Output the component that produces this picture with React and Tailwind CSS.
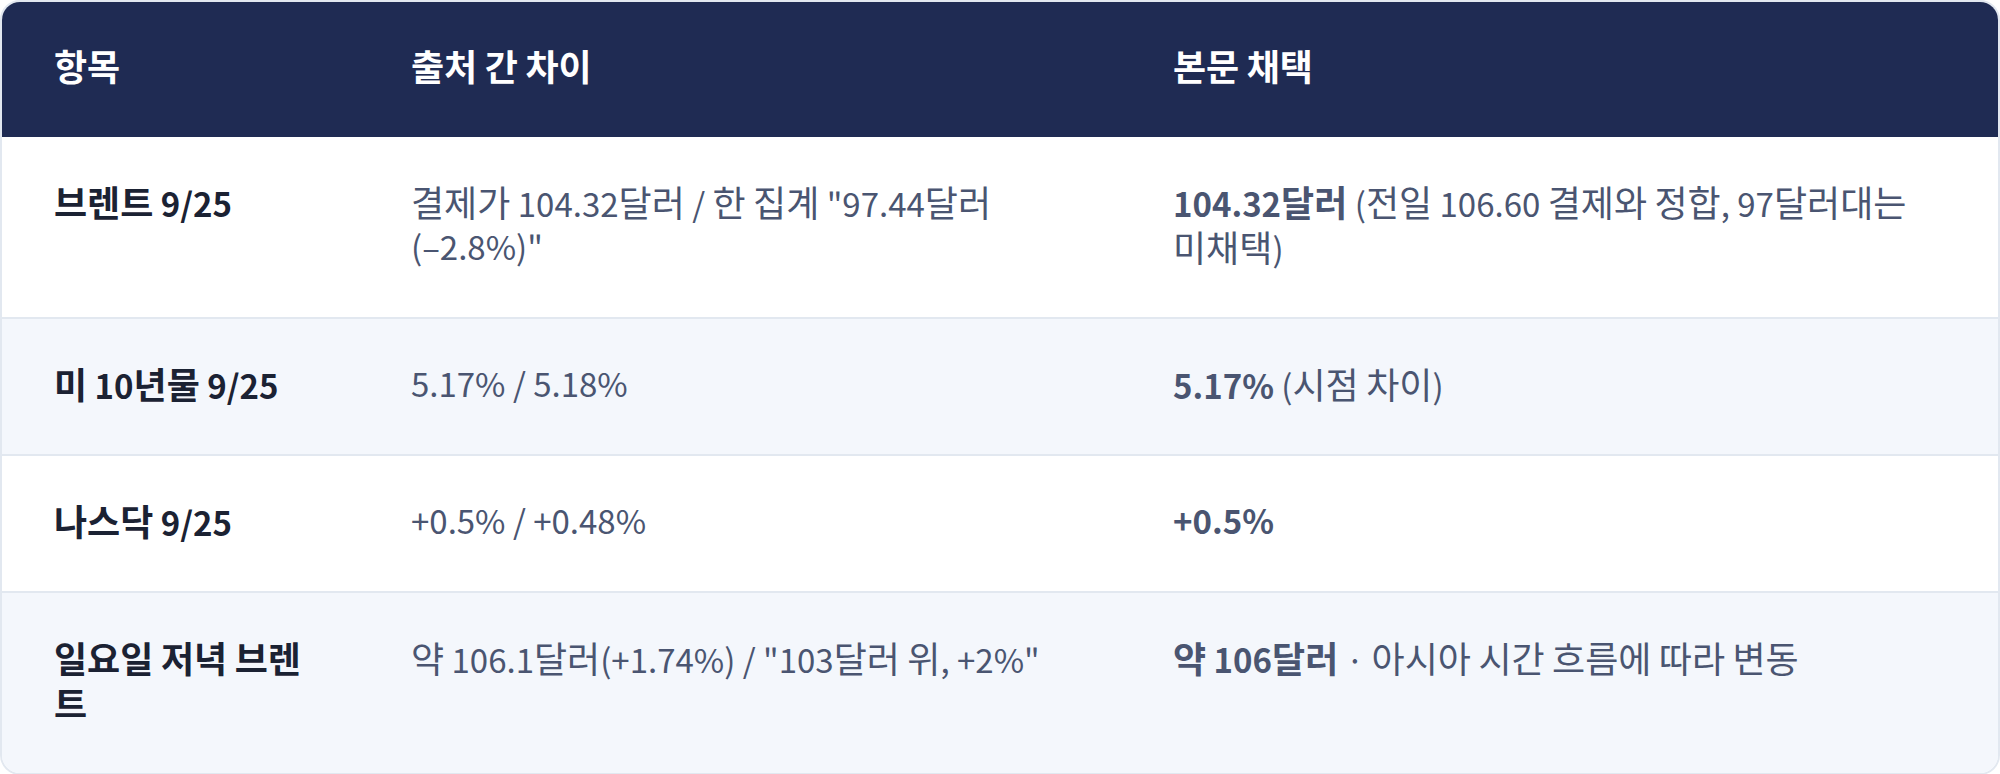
// Hangul runs are set a little larger than the Latin/digit runs, as in the reference
const K = (s) =>
	s.split(/([\uAC00-\uD7A3]+)/).map((part, i) =>
		/[\uAC00-\uD7A3]/.test(part) ? (
			<span key={i} className="text-[36px]">
				{part}
			</span>
		) : (
			part
		)
	);

const rows = [
	{
		item: "브렌트 9/25",
		diff: (
			<>
				{K('결제가 104.32달러 / 한 집계 "97.44달러 ')}
				<span className="whitespace-nowrap">(–2.8%)"</span>
			</>
		),
		strong: "104.32달러",
		rest: " (전일 106.60 결제와 정합, 97달러대는 미채택)",
	},
	{
		item: "미 10년물 9/25",
		diff: K("5.17% / 5.18%"),
		strong: "5.17%",
		rest: " (시점 차이)",
	},
	{
		item: "나스닥 9/25",
		diff: K("+0.5% / +0.48%"),
		strong: "+0.5%",
		rest: "",
	},
	{
		item: "일요일 저녁 브렌트",
		diff: K('약 106.1달러(+1.74%) / "103달러 위, +2%"'),
		strong: "약 106달러",
		rest: " · 아시아 시간 흐름에 따라 변동",
	},
];

export default function App() {
	return (
		<div className="w-[2000px] h-[774px] bg-white font-['Noto_Sans_CJK_KR',sans-serif]">
			<div className="rounded-[20px] overflow-hidden border-2 border-[#e2e8f0]">
				<table className="w-full table-fixed border-collapse text-[33px] leading-[43px]">
					<colgroup>
						<col className="w-[357px]" />
						<col className="w-[762px]" />
						<col />
					</colgroup>
					<thead>
						<tr className="bg-[#1f2b53] text-white text-left">
							<th className="pl-[52px] pr-[43px] pt-[42px] pb-[48px] font-bold">{K("항목")}</th>
							<th className="px-[52px] pt-[42px] pb-[48px] font-bold">{K("출처 간 차이")}</th>
							<th className="px-[52px] pt-[42px] pb-[48px] font-bold">{K("본문 채택")}</th>
						</tr>
					</thead>
					<tbody>
						{rows.map((r, i) => (
							<tr
								key={i}
								className={
									(i % 2 === 1 ? "bg-[#f4f7fc] " : "bg-white ") +
									(i > 0 ? "border-t-2 border-[#e2e8f0]" : "")
								}
							>
								<td className="pl-[52px] pr-[43px] pt-[43px] pb-[47px] align-top font-bold text-[#1b2233] break-all">
									{K(r.item)}
								</td>
								<td className="px-[52px] pt-[43px] pb-[47px] align-top text-[#4a5571] break-keep">
									{r.diff}
								</td>
								<td className="px-[52px] pt-[43px] pb-[47px] align-top text-[#4a5571] break-keep">
									<strong className="font-bold">{K(r.strong)}</strong>
									{K(r.rest)}
								</td>
							</tr>
						))}
					</tbody>
				</table>
			</div>
		</div>
	);
}
